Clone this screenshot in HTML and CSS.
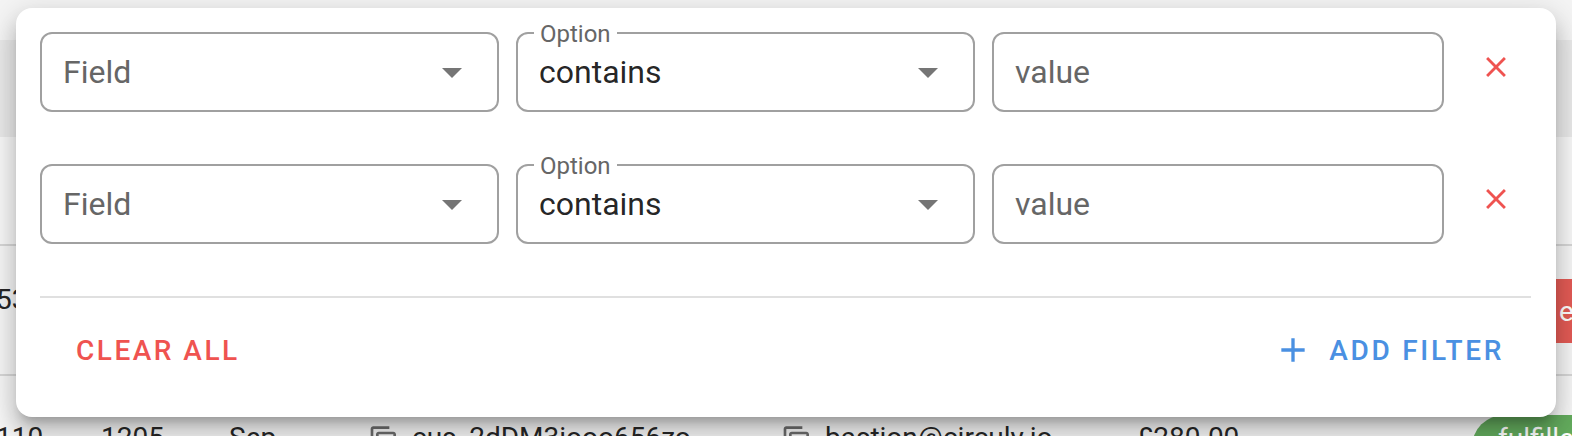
FILE: index.html
```html
<!DOCTYPE html>
<html>
<head>
<meta charset="utf-8">
<link rel="stylesheet" href="styles.css">
</head>
<body>
<div class="table">
  <div class="toolbar"></div>
  <div class="thead"></div>
  <div class="trow row-a"></div>
  <div class="trow row-b">
    <div class="cell cell-first">53</div>
    <div class="cell"></div>
    <div class="cell"></div>
    <div class="cell"></div>
    <div class="cell"></div>
    <div class="cell"></div>
    <div class="cell"><span class="chip chip-red">expired</span></div>
  </div>
  <div class="trow row-c">
    <div class="cell cell-first">110</div>
    <div class="cell">1205</div>
    <div class="cell">Sep</div>
    <div class="cell"><svg class="copy" viewBox="0 0 24 24"><path d="M16 1H4c-1.1 0-2 .9-2 2v14h2V3h12V1zm3 4H8c-1.1 0-2 .9-2 2v14c0 1.1.9 2 2 2h11c1.1 0 2-.9 2-2V7c0-1.1-.9-2-2-2zm0 16H8V7h11v14z"/></svg><span>cus_2dDM3iooo656zo</span></div>
    <div class="cell"><svg class="copy" viewBox="0 0 24 24"><path d="M16 1H4c-1.1 0-2 .9-2 2v14h2V3h12V1zm3 4H8c-1.1 0-2 .9-2 2v14c0 1.1.9 2 2 2h11c1.1 0 2-.9 2-2V7c0-1.1-.9-2-2-2zm0 16H8V7h11v14z"/></svg><span>bastion@circuly.io</span></div>
    <div class="cell">£280.00</div>
    <div class="cell"><span class="chip chip-green">fulfilled</span></div>
  </div>
</div>

<div class="popover">
  <div class="rows">
    <div class="filter-row">
      <div class="box">
        <span class="label-inline">Field</span>
        <svg class="arrow" viewBox="0 0 20 10"><path d="M0 0L10 10L20 0Z"/></svg>
      </div>
      <div class="box">
        <span class="legend">Option</span>
        <span class="value-text">contains</span>
        <svg class="arrow" viewBox="0 0 20 10"><path d="M0 0L10 10L20 0Z"/></svg>
      </div>
      <div class="box">
        <span class="label-inline">value</span>
      </div>
      <button class="remove" type="button"><svg viewBox="0 0 24 24"><path d="M19 6.41 17.59 5 12 10.59 6.41 5 5 6.41 10.59 12 5 17.59 6.41 19 12 13.41 17.59 19 19 17.59 13.41 12z"/></svg></button>
    </div>
    <div class="filter-row">
      <div class="box">
        <span class="label-inline">Field</span>
        <svg class="arrow" viewBox="0 0 20 10"><path d="M0 0L10 10L20 0Z"/></svg>
      </div>
      <div class="box">
        <span class="legend">Option</span>
        <span class="value-text">contains</span>
        <svg class="arrow" viewBox="0 0 20 10"><path d="M0 0L10 10L20 0Z"/></svg>
      </div>
      <div class="box">
        <span class="label-inline">value</span>
      </div>
      <button class="remove" type="button"><svg viewBox="0 0 24 24"><path d="M19 6.41 17.59 5 12 10.59 6.41 5 5 6.41 10.59 12 5 17.59 6.41 19 12 13.41 17.59 19 19 17.59 13.41 12z"/></svg></button>
    </div>
  </div>
  <div class="divider"></div>
  <div class="actions">
    <button class="btn btn-clear" type="button">Clear all</button>
    <button class="btn btn-add" type="button"><svg viewBox="0 0 24 24"><path d="M19 13h-6v6h-2v-6H5v-2h6V5h2v6h6v2z"/></svg><span>Add filter</span></button>
  </div>
</div>
</body>
</html>
```

FILE: styles.css
```css
* { box-sizing: border-box; }

html, body {
  margin: 0;
  padding: 0;
}

body {
  width: 1572px;
  height: 436px;
  overflow: hidden;
  position: relative;
  background: #f4f4f4;
  font-family: "Roboto", "Liberation Sans", sans-serif;
}

/* background table */
.table {
  display: flex;
  flex-direction: column;
}

.toolbar {
  height: 40px;
  background: #f4f4f4;
}

.thead {
  height: 97px;
  background: #e9e9e9;
}

.trow {
  border-bottom: 2px solid #d6d6d6;
}

.row-a {
  height: 109px;
  background: #f7f7f7;
}

.row-b,
.row-c {
  display: grid;
  grid-template-columns: 101px 128px 139px 413px 356px 335px 1fr;
  align-items: start;
  background: #f5f5f5;
  font-size: 28px;
  line-height: 32px;
  color: #262626;
}

.row-b {
  height: 130px;
  padding-top: 38px;
}

.row-c {
  height: 128px;
  padding-top: 46px;
}

.cell {
  display: flex;
  align-items: flex-start;
  white-space: nowrap;
}

.cell-first {
  margin-left: -4px;
}

.copy {
  width: 32px;
  height: 32px;
  fill: #6b6b6b;
  margin-top: 3px;
  margin-right: 12px;
  flex: none;
}

.chip {
  display: inline-block;
  height: 64px;
  border-radius: 32px;
  line-height: 32px;
  color: #fff;
  font-size: 28px;
}

.chip-red {
  background: #e35b55;
  margin-top: -5px;
  margin-left: 48px;
  padding: 17px 24px 15px 39px;
}

.chip-green {
  background: #63ab5d;
  margin-top: -7px;
  padding: 8px 24px 24px 26px;
}

/* popover */
.popover {
  position: absolute;
  left: 16px;
  top: 8px;
  width: 1540px;
  height: 409px;
  background: #fff;
  border-radius: 16px;
  padding: 24px 25px 31px 24px;
  box-shadow: 0 10px 10px -6px rgba(0,0,0,0.2), 0 16px 20px 2px rgba(0,0,0,0.14), 0 6px 28px 4px rgba(0,0,0,0.12);
}

.rows {
  display: flex;
  flex-direction: column;
  gap: 52px;
}

.filter-row {
  display: grid;
  grid-template-columns: 459px 459px 1fr 70px;
  column-gap: 17px;
  align-items: start;
}

.box {
  position: relative;
  height: 80px;
  border: 2px solid #a0a0a0;
  border-radius: 12px;
  display: flex;
  align-items: center;
  padding-left: 21px;
  font-size: 32px;
  line-height: 46px;
}

.label-inline {
  color: #666;
  flex: 1;
}

.value-text {
  color: rgba(0,0,0,0.87);
  flex: 1;
}

.legend {
  position: absolute;
  left: 16px;
  top: -12px;
  padding: 0 6px;
  background: #fff;
  font-size: 24px;
  line-height: 24px;
  color: #666;
}

.arrow {
  width: 20px;
  height: 10px;
  margin-right: 35px;
  margin-top: 2px;
  fill: #757575;
  flex: none;
}

.remove {
  height: 66px;
  margin-top: 2px;
  border: 0;
  padding: 0;
  background: transparent;
  display: flex;
  align-items: center;
  justify-content: center;
}

.remove svg {
  width: 34px;
  height: 34px;
  fill: #ef5350;
}

.divider {
  margin-top: 52px;
  height: 2px;
  background: #e0e0e0;
}

.actions {
  display: flex;
  justify-content: space-between;
  padding: 16px 11px 0 20px;
}

.btn {
  height: 72px;
  border: 0;
  background: transparent;
  padding: 0 16px;
  display: flex;
  align-items: center;
  font-family: "Roboto", "Liberation Sans", sans-serif;
  font-size: 28px;
  font-weight: 500;
  text-transform: uppercase;
}

.btn-clear {
  color: #ef5350;
  letter-spacing: 2.5px;
}

.btn-add {
  color: #4a90e2;
  letter-spacing: 2.7px;
}

.btn-add svg {
  width: 40px;
  height: 40px;
  fill: #4a90e2;
  margin-right: 16px;
  margin-left: -4px;
}
```
